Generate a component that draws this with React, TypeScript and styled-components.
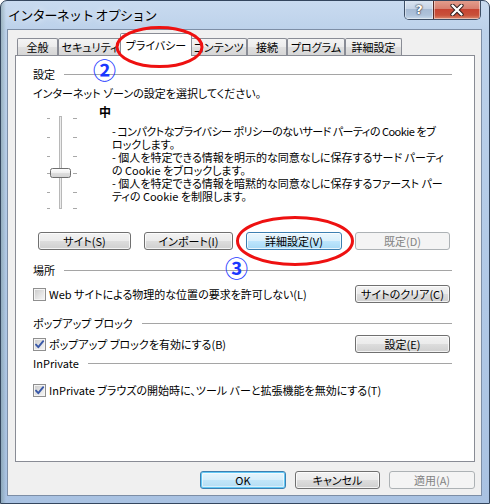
import React from "react";
import styled, { createGlobalStyle, css } from "styled-components";

const Global = createGlobalStyle`
  html, body { margin: 0; padding: 0; background: #fff; }
  body {
    font-family: "Noto Sans CJK JP", "Noto Sans", sans-serif;
    font-size: 11px;
    color: #000;
    font-feature-settings: "palt" 1;
  }
  * { box-sizing: border-box; }
`;

const Window = styled.div`
  position: relative;
  width: 490px;
  height: 504px;
  display: flex;
  flex-direction: column;
  border: 1px solid #34465e;
  border-radius: 7px 7px 0 0;
  padding: 0 7px 7px 6px;
  overflow: hidden;
  background:
    linear-gradient(90deg, rgba(90,120,110,0.35) 0px, rgba(255,255,255,0) 5px),
    linear-gradient(180deg, #c9dbf0 0%, #bcd1ea 6%, #b0c8e6 60%, #a9c2e2 100%);
`;

const TitleBar = styled.div`
  height: 28px;
  flex: none;
  display: flex;
  align-items: flex-start;
  justify-content: space-between;
`;

const Title = styled.div`
  margin: 6px 0 0 1px;
  font-size: 13px;
  line-height: 16px;
  font-feature-settings: normal;
  letter-spacing: -0.8px;
  text-shadow: 0 0 6px rgba(255,255,255,0.9);
`;

const CaptionButtons = styled.div`
  display: flex;
  margin-top: -1px;
  margin-right: 1px;
  height: 20px;
  border: 1px solid #3e4f66;
  border-top: none;
  border-radius: 0 0 5px 5px;
  overflow: hidden;
`;

const CaptionBtn = styled.div<{ $w: number; $close?: boolean }>`
  width: ${(p) => p.$w}px;
  height: 100%;
  display: flex;
  align-items: center;
  justify-content: center;
  color: #fff;
  font-family: "DejaVu Sans", sans-serif;
  font-weight: 700;
  font-size: 13px;
  text-shadow: 0 0 2px #223, 0 0 1px #000;
  box-shadow: inset 0 0 0 1px rgba(255,255,255,0.45);
  ${(p) =>
    p.$close
      ? css`
          border-left: 1px solid #5a2a25;
          background: linear-gradient(180deg, #e4a190 0%, #d88070 45%, #c74432 50%, #c9513a 80%, #dc8a6f 100%);
        `
      : css`
          background: linear-gradient(180deg, #dce6f2 0%, #c6d4e6 45%, #a7bbd4 50%, #afc3db 80%, #c7d9ea 100%);
        `}
`;

const Body = styled.div`
  flex: 1;
  display: flex;
  flex-direction: column;
  background: #f0f0f0;
  border: 1px solid #7d8ea6;
  padding: 3px 6px 0 7px;
`;

const TabRow = styled.div`
  height: 22px;
  display: flex;
  align-items: flex-end;
  padding-left: 2px;
`;

const Tab = styled.div<{ $w: number; $active?: boolean }>`
  width: ${(p) => p.$w}px;
  height: 17px;
  flex: none;
  display: flex;
  align-items: center;
  justify-content: center;
  border: 1px solid #898c95;
  border-bottom: none;
  border-radius: 2px 2px 0 0;
  line-height: 14px;
  white-space: nowrap;
  background: linear-gradient(180deg, #f4f4f4 0%, #ececec 50%, #e0e0e0 51%, #d6d6d6 100%);
  ${(p) =>
    p.$active &&
    css`
      position: relative;
      z-index: 2;
      width: ${p.$w + 4}px;
      height: 23px;
      margin: 0 -2px -1px;
      background: #fff;
      padding-bottom: 1px;
    `}
`;

const Panel = styled.div`
  height: 407px;
  flex: none;
  background: #fff;
  border: 1px solid #898c95;
  padding: 0 22px 0 17px;
  display: flex;
  flex-direction: column;
`;

const SectionHead = styled.div<{ $mt: number }>`
  margin-top: ${(p) => p.$mt}px;
  height: 14px;
  line-height: 14px;
  display: flex;
  align-items: center;
  white-space: nowrap;
  &::after {
    content: "";
    flex: 1;
    height: 1px;
    margin-left: 9px;
    background: #a5a5a5;
  }
`;

const TextLine = styled.div<{ $mt: number }>`
  margin-top: ${(p) => p.$mt}px;
  height: 14px;
  line-height: 14px;
  white-space: nowrap;
`;

const PrivacyArea = styled.div`
  height: 110px;
  display: flex;
  align-items: flex-start;
`;

const SliderArt = styled.svg`
  margin: 16px 0 0 12px;
  flex: none;
`;

const LevelCol = styled.div`
  margin-left: 21px;
  display: flex;
  flex-direction: column;
`;

const Level = styled.div`
  margin-top: 5px;
  height: 14px;
  line-height: 14px;
  font-size: 12px;
  font-weight: 700;
`;

const Desc = styled.div`
  margin-top: 6px;
  padding-left: 13px;
  display: flex;
  flex-direction: column;
`;

const DescLine = styled.div<{ $tight?: boolean }>`
  height: 13px;
  line-height: 13px;
  white-space: nowrap;
  letter-spacing: ${(p) => (p.$tight ? "-0.5px" : "0")};
`;

const ButtonRow = styled.div`
  margin-top: 22px;
  display: flex;
  justify-content: space-between;
  padding: 0 2px 0 5px;
`;

type Variant = "normal" | "hot" | "default" | "disabled";

const Btn = styled.div<{ $w: number; $v?: Variant }>`
  width: ${(p) => p.$w}px;
  height: 18px;
  flex: none;
  display: flex;
  align-items: center;
  justify-content: center;
  border: 1px solid #707070;
  border-radius: 3px;
  line-height: 14px;
  white-space: nowrap;
  background: linear-gradient(180deg, #f2f2f2 0%, #ebebeb 50%, #dddddd 51%, #cfcfcf 100%);
  box-shadow: inset 0 0 0 1px rgba(255, 255, 255, 0.75);
  ${(p) =>
    p.$v === "hot" &&
    css`
      border-color: #3c7fb1;
      background: linear-gradient(180deg, #eaf6fd 0%, #d9f0fc 50%, #bee6fd 51%, #a7d9f5 100%);
    `}
  ${(p) =>
    p.$v === "default" &&
    css`
      border-color: #3c7fb1;
      background: linear-gradient(180deg, #e8f5fc 0%, #d6eefb 50%, #c2e6f9 51%, #b3dcf3 100%);
      box-shadow: inset 0 0 0 1px #64c9f5, inset 0 0 0 2px rgba(255, 255, 255, 0.5);
    `}
  ${(p) =>
    p.$v === "disabled" &&
    css`
      border-color: #adb2b5;
      background: #f4f4f4;
      color: #838383;
      box-shadow: none;
    `}
`;

const OptionRow = styled.div<{ $mt: number }>`
  margin-top: ${(p) => p.$mt}px;
  min-height: 14px;
  display: flex;
  align-items: center;
  justify-content: space-between;
  padding-right: 2px;
`;

const CheckLabel = styled.label`
  display: flex;
  align-items: center;
  gap: 3px;
  line-height: 14px;
  white-space: nowrap;
`;

const Box = styled.span`
  width: 13px;
  height: 13px;
  flex: none;
  display: flex;
  align-items: center;
  justify-content: center;
  border: 1px solid #8f8f8f;
  background: linear-gradient(135deg, #c9c9c9 0%, #e4e4e4 55%, #f7f7f7 100%);
  box-shadow: inset 0 0 0 1px #f4f4f4;
`;

const DialogButtons = styled.div`
  margin-top: 9px;
  display: flex;
  justify-content: flex-end;
  gap: 9px;
`;

const Overlay = styled.svg`
  position: absolute;
  left: -1px;
  top: -1px;
  pointer-events: none;
  z-index: 5;
`;

const Badge = styled.span<{ $x: number; $y: number }>`
  position: absolute;
  left: ${(p) => p.$x}px;
  top: ${(p) => p.$y}px;
  z-index: 6;
  font-family: "Noto Sans CJK JP", sans-serif;
  font-size: 23px;
  font-weight: 700;
  line-height: 23px;
  color: #1a38ff;
  font-feature-settings: normal;
`;

const Check: React.FC<{ checked?: boolean; label: string }> = ({ checked, label }) => (
  <CheckLabel>
    <Box>
      {checked && (
        <svg width="11" height="11" viewBox="0 0 11 11">
          <path d="M2 5.6 L4.3 8.2 L9.2 2.2" fill="none" stroke="#3a59a8" strokeWidth="1.9" strokeLinecap="round" strokeLinejoin="round" />
        </svg>
      )}
    </Box>
    {label}
  </CheckLabel>
);

const Slider: React.FC = () => {
  const ticks = [2, 21, 40, 57, 76, 92];
  return (
    <SliderArt width="33" height="94" viewBox="0 0 33 94">
      <defs>
        <linearGradient id="thumb" x1="0" y1="0" x2="0" y2="1">
          <stop offset="0" stopColor="#ffffff" />
          <stop offset="0.5" stopColor="#efefef" />
          <stop offset="0.55" stopColor="#dedede" />
          <stop offset="1" stopColor="#d2d2d2" />
        </linearGradient>
      </defs>
      <rect x="14.5" y="0.5" width="2" height="92" fill="#ececec" stroke="#b8b8b8" strokeWidth="1" />
      {ticks.map((t) => (
        <g key={t}>
          <line x1="2" x2="5" y1={t + 0.5} y2={t + 0.5} stroke="#a8a8a8" />
          <line x1="28" x2="32" y1={t + 0.5} y2={t + 0.5} stroke="#a8a8a8" />
        </g>
      ))}
      <rect x="5.5" y="52.5" width="20" height="9" rx="2" fill="url(#thumb)" stroke="#6f6f6f" />
    </SliderArt>
  );
};

const descLines: { text: string; tight?: boolean }[] = [
  { text: "- コンパクトなプライバシー ポリシーのないサード パーティの Cookie をブ", tight: true },
  { text: "ロックします。" },
  { text: "- 個人を特定できる情報を明示的な同意なしに保存するサード パーティ" },
  { text: "の Cookie をブロックします。" },
  { text: "- 個人を特定できる情報を暗黙的な同意なしに保存するファースト パー" },
  { text: "ティの Cookie を制限します。" },
];

const tabs: { label: string; w: number; active?: boolean }[] = [
  { label: "全般", w: 41 },
  { label: "セキュリティ", w: 64 },
  { label: "プライバシー", w: 68, active: true },
  { label: "コンテンツ", w: 57 },
  { label: "接続", w: 40 },
  { label: "プログラム", w: 58 },
  { label: "詳細設定", w: 57 },
];

export default function App() {
  return (
    <>
      <Global />
      <Window>
        <TitleBar>
          <Title>インターネット オプション</Title>
          <CaptionButtons>
            <CaptionBtn $w={28}>?</CaptionBtn>
            <CaptionBtn $w={47} $close>
              <svg width="14" height="12" viewBox="0 0 14 12">
                <path d="M2.5 1.5 L11.5 10.5 M11.5 1.5 L2.5 10.5" stroke="#2b1a1a" strokeWidth="4.2" strokeLinecap="round" />
                <path d="M2.5 1.5 L11.5 10.5 M11.5 1.5 L2.5 10.5" stroke="#ffffff" strokeWidth="2.4" strokeLinecap="round" />
              </svg>
            </CaptionBtn>
          </CaptionButtons>
        </TitleBar>
        <Body>
          <TabRow>
            {tabs.map((t) => (
              <Tab key={t.label} $w={t.w} $active={t.active}>
                {t.label}
              </Tab>
            ))}
          </TabRow>
          <Panel>
            <SectionHead $mt={11}>設定</SectionHead>
            <TextLine $mt={5}>インターネット ゾーンの設定を選択してください。</TextLine>
            <PrivacyArea>
              <Slider />
              <LevelCol>
                <Level>中</Level>
                <Desc>
                  {descLines.map((l) => (
                    <DescLine key={l.text} $tight={l.tight}>
                      {l.text}
                    </DescLine>
                  ))}
                </Desc>
              </LevelCol>
            </PrivacyArea>
            <ButtonRow>
              <Btn $w={93}>サイト(S)</Btn>
              <Btn $w={89}>インポート(I)</Btn>
              <Btn $w={96} $v="hot">詳細設定(V)</Btn>
              <Btn $w={95} $v="disabled">既定(D)</Btn>
            </ButtonRow>
            <SectionHead $mt={13}>場所</SectionHead>
            <OptionRow $mt={8}>
              <Check label="Web サイトによる物理的な位置の要求を許可しない(L)" />
              <Btn $w={95}>サイトのクリア(C)</Btn>
            </OptionRow>
            <SectionHead $mt={13}>ポップアップ ブロック</SectionHead>
            <OptionRow $mt={5}>
              <Check checked label="ポップアップ ブロックを有効にする(B)" />
              <Btn $w={95}>設定(E)</Btn>
            </OptionRow>
            <SectionHead $mt={3}>InPrivate</SectionHead>
            <OptionRow $mt={13}>
              <Check checked label="InPrivate ブラウズの開始時に、ツール バーと拡張機能を無効にする(T)" />
            </OptionRow>
          </Panel>
          <DialogButtons>
            <Btn $w={86} $v="default">OK</Btn>
            <Btn $w={85}>キャンセル</Btn>
            <Btn $w={86} $v="disabled">適用(A)</Btn>
          </DialogButtons>
        </Body>
        <Overlay width="490" height="504" viewBox="0 0 490 504">
          <ellipse cx="159.5" cy="47" rx="42.5" ry="19.5" fill="none" stroke="#ee1111" strokeWidth="3" />
          <ellipse cx="295" cy="241" rx="57.5" ry="23.5" fill="none" stroke="#ee1111" strokeWidth="3" />
        </Overlay>
        <Badge $x={92} $y={57}>②</Badge>
        <Badge $x={224} $y={255}>③</Badge>
      </Window>
    </>
  );
}
